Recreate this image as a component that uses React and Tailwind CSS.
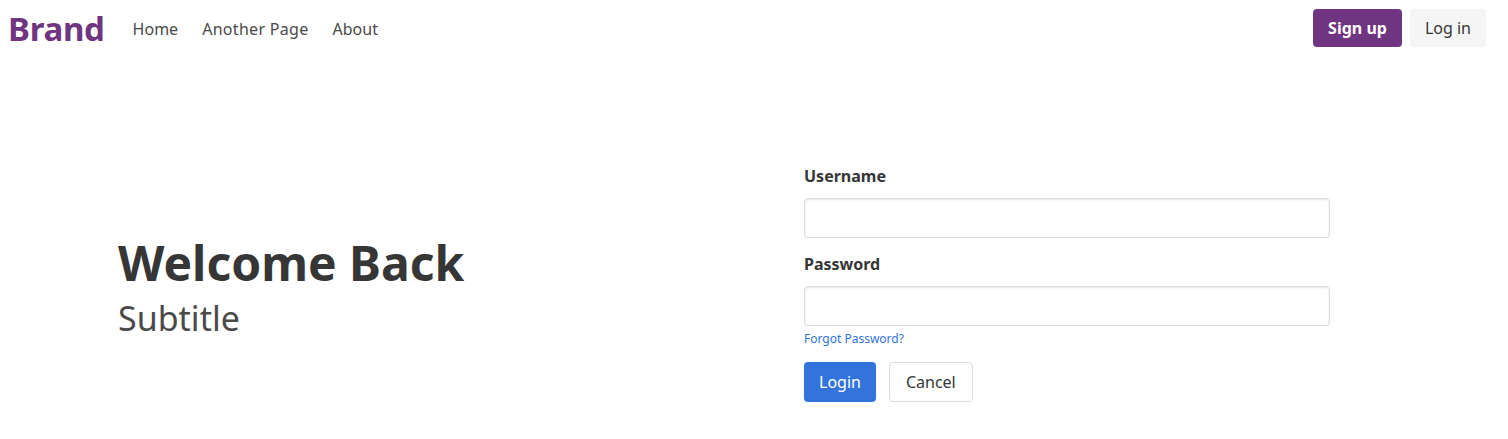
import { useState } from 'react';

const font = { fontFamily: '"Noto Sans", "Open Sans", sans-serif' };

// Top navigation bar
const Navbar = () => (
  <nav className="flex h-[56px] items-center justify-between pl-2 pr-[22px]">
    <div className="flex items-center">
      <a href="#" className="text-[33px] font-bold leading-none text-[#6f3581] tracking-[-0.3px]">
        Brand
      </a>
      <div className="ml-[16px] mt-[2px] flex items-center text-[16px] text-[#4a4a4a]">
        <a href="#" className="px-3 py-2">Home</a>
        <a href="#" className="px-3 py-2 tracking-[0.3px]">Another Page</a>
        <a href="#" className="px-3 py-2">About</a>
      </div>
    </div>
    <div className="flex items-center gap-2">
      <button className="h-[38px] rounded-[4px] bg-[#6f3581] px-[15px] text-[16px] font-bold text-white">
        Sign up
      </button>
      <button className="h-[38px] rounded-[4px] bg-[#f5f5f5] px-[15px] text-[16px] text-[#363636]">
        Log in
      </button>
    </div>
  </nav>
);

const Field = ({ label, type, value, onChange }) => (
  <div>
    <label className="mb-[10px] block text-[16px] font-bold leading-[24px] text-[#363636]">{label}</label>
    <input
      type={type}
      value={value}
      onChange={(e) => onChange(e.target.value)}
      className="block h-[40px] w-full rounded-[4px] border border-[#dbdbdb] px-3 text-[16px] text-[#363636] shadow-[inset_0_1px_2px_rgba(10,10,10,0.1)] outline-none"
    />
  </div>
);

export default function App() {
  const [username, setUsername] = useState('');
  const [password, setPassword] = useState('');

  return (
    <div className="min-h-screen bg-white" style={font}>
      <Navbar />

      {/* Hero: title on the left, login form on the right */}
      <div className="flex items-center pt-[108px]">
        <div className="w-[804px] shrink-0 pl-[118px] pt-[8px]">
          <h1 className="text-[48px] font-bold leading-[54px] text-[#363636]">Welcome Back</h1>
          <h2 className="mt-[8px] text-[34px] leading-[40px] text-[#4a4a4a]">Subtitle</h2>
        </div>

        <form className="w-[526px] shrink-0" onSubmit={(e) => e.preventDefault()}>
          <Field label="Username" type="text" value={username} onChange={setUsername} />
          <div className="mt-[14px]">
            <Field label="Password" type="password" value={password} onChange={setPassword} />
          </div>
          <a href="#" className="mt-[4px] block text-[12px] leading-[18px] text-[#3273dc]">
            Forgot Password?
          </a>
          <div className="mt-[14px] flex gap-[13px]">
            <button className="h-[40px] rounded-[4px] bg-[#3273dc] px-[15px] text-[16px] text-white">
              Login
            </button>
            <button type="button" className="h-[40px] rounded-[4px] border border-[#dbdbdb] bg-white px-[16px] text-[16px] text-[#363636]">
              Cancel
            </button>
          </div>
        </form>
      </div>
    </div>
  );
}
